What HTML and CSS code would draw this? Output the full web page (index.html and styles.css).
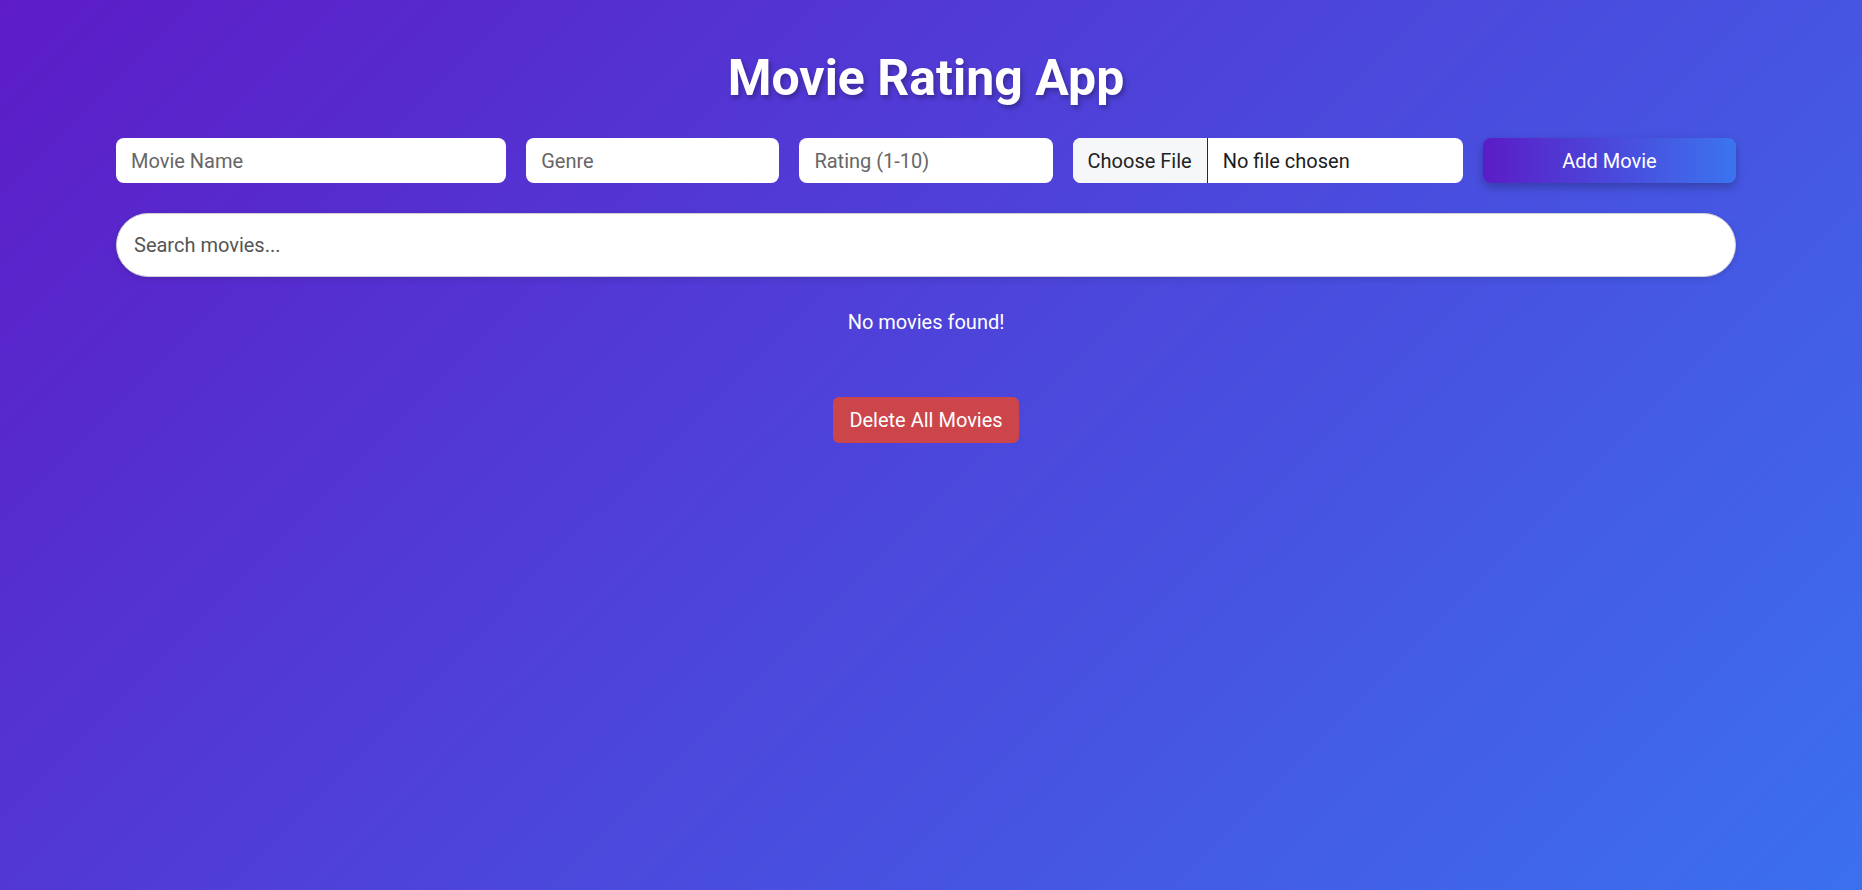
FILE: index.html
```html
<!DOCTYPE html>
<html lang="en">
<head>
<meta charset="UTF-8">
<title>Movie Rating App</title>
<link rel="stylesheet" href="styles.css">
</head>
<body>
<div class="app">
  <h1 class="title">Movie Rating App</h1>
  <form class="add-form">
    <input class="field" type="text" placeholder="Movie Name">
    <input class="field" type="text" placeholder="Genre">
    <input class="field" type="number" placeholder="Rating (1-10)">
    <input class="field file" type="file">
    <button class="add-btn" type="button">Add Movie</button>
  </form>
  <input class="search" type="text" placeholder="Search movies...">
  <p class="empty">No movies found!</p>
  <div class="actions">
    <button class="delete-btn" type="button">Delete All Movies</button>
  </div>
</div>
</body>
</html>
```
FILE: styles.css
```css
html, body {
  margin: 0;
  padding: 0;
}
body {
  min-height: 890px;
  font-family: Roboto, "Liberation Sans", sans-serif;
  font-size: 20px;
  color: #fff;
  background: linear-gradient(135deg, #5d1cc7 0%, #3b70ef 100%);
  padding-right: 10px;
  box-sizing: border-box;
}
.app {
  width: 1620px;
  margin: 0 auto;
  padding-top: 49px;
}
.title {
  margin: 0 0 31px;
  font-size: 50px;
  font-weight: 700;
  line-height: normal;
  text-align: center;
  text-shadow: 2px 3px 5px rgba(0, 0, 0, 0.3);
}
.add-form {
  display: grid;
  grid-template-columns: 390fr 253fr 253fr 390fr 253fr;
  gap: 20px;
  margin: 0 0 30px;
}
.field {
  height: 45px;
  box-sizing: border-box;
  padding: 0 15px;
  border: none;
  border-radius: 8px;
  background: #fff;
  font-family: inherit;
  font-size: 20px;
  color: #222;
  outline: none;
  min-width: 0;
}
.field::placeholder {
  color: #666;
}
.field[type=number]::-webkit-inner-spin-button,
.field[type=number]::-webkit-outer-spin-button {
  -webkit-appearance: none;
  margin: 0;
}
.file {
  overflow: hidden;
  padding-left: 0;
  color: #1c1c1c;
}
.file::file-selector-button {
  height: 45px;
  margin: 0 15px 0 0;
  padding: 0 15px;
  border: none;
  border-right: 1px solid #2a2a2a;
  background: #f6f7f9;
  font-family: inherit;
  font-size: 20px;
  color: #222;
}
.add-btn {
  height: 45px;
  border: none;
  border-radius: 8px;
  background: linear-gradient(90deg, #5b1cc6 0%, #3b74ef 100%);
  color: #fff;
  font-family: inherit;
  font-size: 20px;
  box-shadow: 0 4px 10px rgba(0, 0, 0, 0.25);
  cursor: pointer;
}
.search {
  display: block;
  width: 100%;
  box-sizing: border-box;
  height: 64px;
  padding: 0 17px;
  border: 1px solid #cfcfd8;
  border-radius: 32px;
  background: #fff;
  font-family: inherit;
  font-size: 20px;
  color: #222;
  outline: none;
  box-shadow: 0 2px 6px rgba(0, 0, 0, 0.12);
}
.search::placeholder {
  color: #555;
}
.empty {
  margin: 33px 0 0;
  text-align: center;
  line-height: normal;
}
.actions {
  display: flex;
  justify-content: center;
  margin-top: 63px;
}
.delete-btn {
  height: 46px;
  padding: 0 16px;
  border: none;
  border-radius: 6px;
  background: #cb454b;
  color: #fff;
  font-family: inherit;
  font-size: 20px;
  cursor: pointer;
}
```
